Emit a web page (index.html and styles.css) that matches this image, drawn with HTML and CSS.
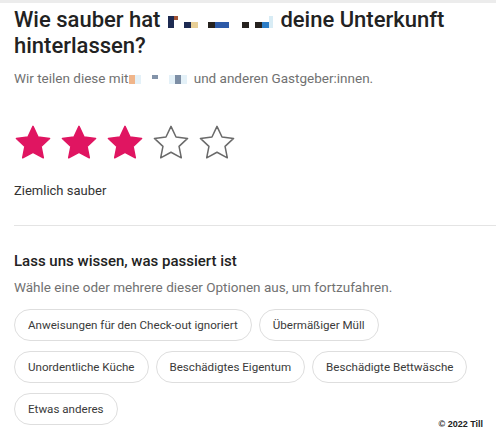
FILE: index.html
```html
<!DOCTYPE html>
<html>
<head>
    <title>Bewertung</title>
    <link rel="stylesheet" href="styles.css">
</head>
<body>
    <div class="topbar"></div>
    <div class="page">
        <h1 class="title"><span>Wie sauber hat</span> <span class="blur"><i class="px navy tall"></i><i class="px rust tiny"></i><i class="gap s"></i><i class="px navy sm low"></i><i class="px sand sm low"></i><i class="gap"></i><i class="px dark sm low"></i><i class="px blue sm low"></i><i class="px blue sm low"></i><i class="gap w"></i><i class="px dark sm low"></i><i class="gap s"></i><i class="px dark sm low"></i><i class="px sky sm low"></i><i class="px pale sm"></i></span> <span>deine Unterkunft</span> <span>hinterlassen?</span></h1>
        <p class="lead">Wir teilen diese mit<span class="blur small"><i class="px peach"></i><i class="px ice"></i><i class="gap"></i><i class="px grey mini"></i><i class="gap"></i><i class="px ice"></i><i class="px slate"></i><i class="px ice"></i></span> und anderen Gastgeber:innen.</p>

        <div class="stars">
            <svg class="star on" viewBox="0 0 40 38"><path d="M20 2.5l5.3 11.2 12.2 1.5-9 8.4 2.4 12.1L20 29.8 9.1 35.7l2.4-12.1-9-8.4 12.2-1.5z"/></svg>
            <svg class="star on" viewBox="0 0 40 38"><path d="M20 2.5l5.3 11.2 12.2 1.5-9 8.4 2.4 12.1L20 29.8 9.1 35.7l2.4-12.1-9-8.4 12.2-1.5z"/></svg>
            <svg class="star on" viewBox="0 0 40 38"><path d="M20 2.5l5.3 11.2 12.2 1.5-9 8.4 2.4 12.1L20 29.8 9.1 35.7l2.4-12.1-9-8.4 12.2-1.5z"/></svg>
            <svg class="star" viewBox="0 0 40 38"><path d="M20 2.5l5.3 11.2 12.2 1.5-9 8.4 2.4 12.1L20 29.8 9.1 35.7l2.4-12.1-9-8.4 12.2-1.5z"/></svg>
            <svg class="star" viewBox="0 0 40 38"><path d="M20 2.5l5.3 11.2 12.2 1.5-9 8.4 2.4 12.1L20 29.8 9.1 35.7l2.4-12.1-9-8.4 12.2-1.5z"/></svg>
        </div>
        <p class="rating">Ziemlich sauber</p>

        <hr class="divider">

        <h2 class="subtitle">Lass uns wissen, was passiert ist</h2>
        <p class="lead">Wähle eine oder mehrere dieser Optionen aus, um fortzufahren.</p>

        <div class="chips">
            <button class="chip">Anweisungen für den Check-out ignoriert</button>
            <button class="chip">Übermäßiger Müll</button>
            <button class="chip">Unordentliche Küche</button>
            <button class="chip">Beschädigtes Eigentum</button>
            <button class="chip">Beschädigte Bettwäsche</button>
            <button class="chip">Etwas anderes</button>
        </div>
    </div>
    <div class="credit">© 2022 Till</div>
</body>
</html>
```

FILE: styles.css
```css
body {
    margin: 0;
    font-family: Roboto, Arial, sans-serif;
    color: #222;
    background: #fff;
    width: 496px;
    height: 438px;
    overflow: hidden;
    position: relative;
}
.topbar {
    height: 3px;
    background: #ececec;
}
.page {
    padding: 0 0 0 14px;
}
.title {
    margin: 4px 0 0;
    font-size: 22px;
    font-weight: 500;
    line-height: 26px;
    width: 470px;
}
.blur {
    display: inline-flex;
    align-items: flex-start;
    height: 14px;
    vertical-align: -1px;
    padding: 0 2px;
}
.px {
    display: inline-block;
    width: 6px;
    height: 6px;
}
.px.tall { height: 12px; width: 6px; }
.px.tiny { width: 4px; height: 4px; }
.px.sm { width: 7px; height: 6px; }
.px.low { margin-top: 6px; }
.gap { display: inline-block; width: 10px; }
.gap.s { width: 6px; }
.gap.w { width: 13px; }
.navy { background: #1d2b52; }
.rust { background: #a25434; }
.sand { background: #e8cf96; }
.dark { background: #26221f; }
.blue { background: #2d5aa8; }
.sky { background: #2c7dc7; }
.pale { background: #d8ecf5; width: 4px !important; height: 12px !important; }
.blur.small { height: 10px; vertical-align: -1px; padding: 0 3px 0 1px; }
.blur.small .px { width: 6px; height: 9px; }
.blur.small .mini { height: 4px; }
.blur.small .gap { width: 11px; }
.peach { background: #f0b58a; }
.ice { background: #e4f1f8; }
.grey { background: #8393a9; }
.slate { background: #7d8ea5; }
.lead {
    margin: 10px 0 0;
    font-size: 13.5px;
    color: #717171;
    line-height: 18px;
}
.stars {
    display: flex;
    gap: 8px;
    margin-top: 37px;
}
.star {
    width: 38px;
    height: 36px;
}
.star path {
    fill: none;
    stroke: #6a6a6a;
    stroke-width: 1.6;
    stroke-linejoin: round;
}
.star.on path {
    fill: #e01561;
    stroke: #e01561;
}
.rating {
    margin: 22px 0 0;
    font-size: 13px;
    line-height: 18px;
    color: #333;
}
.divider {
    margin: 25px 0 0;
    border: none;
    border-top: 1px solid #e4e4e4;
}
.subtitle {
    margin: 25px 0 0;
    font-size: 15px;
    font-weight: 500;
    line-height: 20px;
}
.subtitle + .lead {
    margin-top: 7px;
}
.chips {
    display: flex;
    flex-wrap: wrap;
    gap: 10px 7px;
    margin-top: 13px;
    width: 470px;
}
.chip {
    font-family: inherit;
    font-size: 11.6px;
    color: #3a3a3a;
    background: #fff;
    border: 1px solid #dedede;
    border-radius: 17px;
    height: 32px;
    padding: 0 13px;
}
.credit {
    position: absolute;
    right: 13px;
    bottom: 9px;
    font-family: "Liberation Sans", Arial, sans-serif;
    font-size: 9px;
    font-weight: bold;
    color: #222;
}
```
